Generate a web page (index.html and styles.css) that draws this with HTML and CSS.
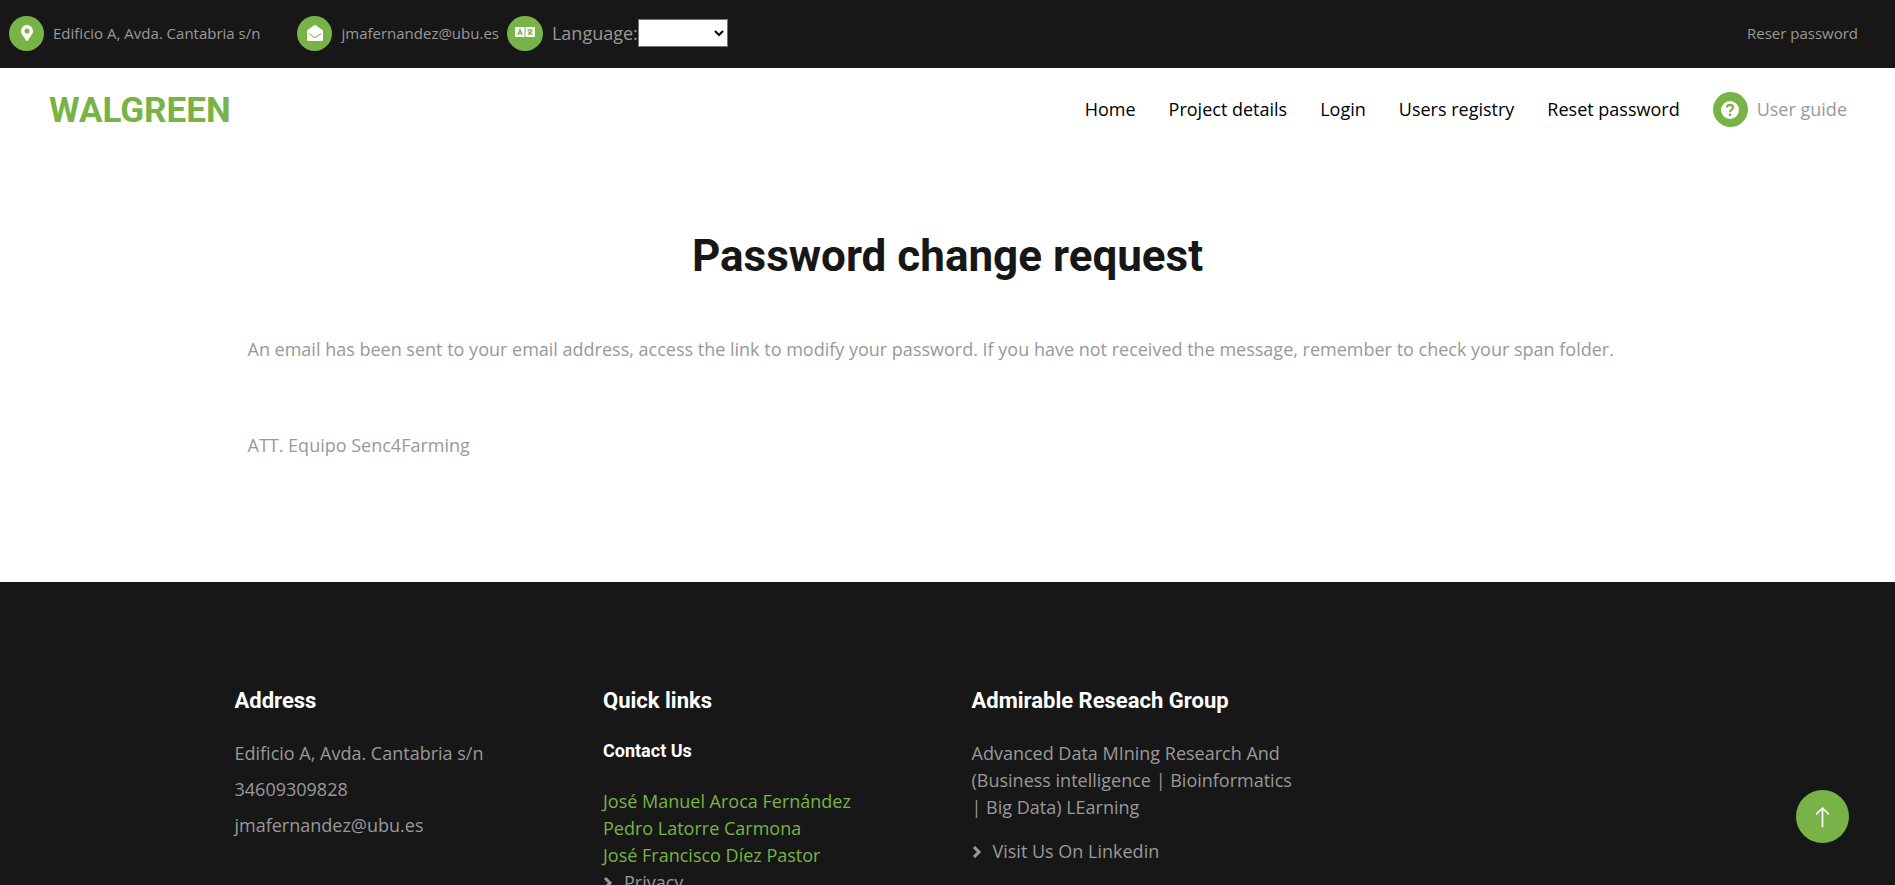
FILE: index.html
```html
<!DOCTYPE html>
<html lang="en">
<head>
<meta charset="utf-8">
<title>Walgreen - Password change request</title>
<link rel="stylesheet" href="styles.css">
</head>
<body>
<div class="topbar">
  <div class="topbar-info">
    <span class="badge"><svg viewBox="0 0 384 512" width="12" height="16"><path fill="currentColor" d="M172 502C27 291 0 270 0 192a192 192 0 0 1 384 0c0 78-27 99-172 310a24 24 0 0 1-40 0zM192 272a80 80 0 1 0 0-160 80 80 0 0 0 0 160z"/></svg></span>
    <span class="topbar-text topbar-address">Edificio A, Avda. Cantabria s/n</span>
    <span class="badge"><svg viewBox="0 0 512 512" width="16" height="16"><path fill="currentColor" d="M512 464a48 48 0 0 1-48 48H48a48 48 0 0 1-48-48V200.700a48 48 0 0 1 18.400-37.800C42.900 143.800 64 127.600 186 39.400 202.700 27.200 235.900-.3 256 0c20.100-.3 53.300 27.200 70 39.400 122 88.200 143.100 104.400 167.600 123.500A48 48 0 0 1 512 200.700V464zm-65.700-196.600a12 12 0 0 0-16.900-2.500c-19.400 14.200-50.400 36.600-103.500 75.200C309.200 353.300 276.100 384.200 256 384c-20.100.2-53.200-30.700-69.900-43.900-53.100-38.600-84.100-61-103.500-75.200a12 12 0 0 0-16.900 2.500l-4.600 6.600a12 12 0 0 0 2.700 16.700c19.500 14.200 50.400 36.600 103.300 75.100 20.400 14.900 54.900 46.500 88.900 46.200 34 .3 68.500-31.300 88.900-46.200 52.900-38.500 83.800-60.900 103.300-75.100a12 12 0 0 0 2.700-16.700z"/></svg></span>
    <span class="topbar-text topbar-mail">jmafernandez@ubu.es</span>
    <span class="badge badge-language"><svg viewBox="0 0 20 16" width="20" height="16"><path fill="currentColor" d="M1 2h8.500v10H1a1 1 0 0 1-1-1V3a1 1 0 0 1 1-1zm9.500 0H19a1 1 0 0 1 1 1v8a1 1 0 0 1-1 1h-8.500z"/><path fill="none" stroke="#78b347" stroke-width="1.300" d="M2.800 10 5 4.500 7.200 10M3.600 8.300h2.800M12.500 5.200h5M15 4v1.200M16.800 5.500c-.5 2-2 3.500-4 4.200M13.400 6.500c.8 1.500 2 2.600 4 3.200"/></svg></span>
    <label class="language-label" for="language">Language:</label><select class="language-select" id="language"><option></option><option>English</option><option>Español</option></select>
  </div>
  <a class="topbar-text" href="#">Reser password</a>
</div>
<header class="header">
  <a class="brand" href="#">WALGREEN</a>
  <nav class="nav">
    <a href="#">Home</a>
    <a href="#">Project details</a>
    <a href="#">Login</a>
    <a href="#">Users registry</a>
    <a href="#">Reset password</a>
    <a class="guide" href="#"><span class="badge"><svg viewBox="0 0 18 18" width="18" height="18"><circle cx="9" cy="9" r="9" fill="currentColor"/><path fill="none" stroke="#78b347" stroke-width="2.200" d="M5.800 6.500C6 4.700 7.300 3.900 9 3.900c1.800 0 3.100 1 3.100 2.600C12.100 8.600 9 8.600 9 11.200"/><circle cx="9" cy="13.800" r="1.400" fill="#78b347"/></svg></span>User guide</a>
  </nav>
</header>
<main class="main">
  <h1>Password change request</h1>
  <p>An email has been sent to your email address, access the link to modify your password. If you have not received the message, remember to check your span folder.</p>
  <p>ATT. Equipo Senc4Farming</p>
</main>
<footer class="footer">
  <div class="footer-grid">
    <section>
      <h2>Address</h2>
      <p class="contact-line">Edificio A, Avda. Cantabria s/n</p>
      <p class="contact-line">34609309828</p>
      <p class="contact-line">jmafernandez@ubu.es</p>
    </section>
    <section>
      <h2>Quick links</h2>
      <h3>Contact Us</h3>
      <a class="person" href="#">José Manuel Aroca Fernández</a>
      <a class="person" href="#">Pedro Latorre Carmona</a>
      <a class="person" href="#">José Francisco Díez Pastor</a>
      <a class="arrow-link" href="#"><svg viewBox="0 0 10 14" width="10" height="14"><path fill="none" stroke="currentColor" stroke-width="3" d="m2 2 5 5-5 5"/></svg>Privacy</a>
    </section>
    <section>
      <h2>Admirable Reseach Group</h2>
      <p class="about">Advanced Data MIning Research And (Business intelligence | Bioinformatics | Big Data) LEarning</p>
      <a class="arrow-link" href="#"><svg viewBox="0 0 10 14" width="10" height="14"><path fill="none" stroke="currentColor" stroke-width="3" d="m2 2 5 5-5 5"/></svg>Visit Us On Linkedin</a>
    </section>
  </div>
</footer>
<a class="back-to-top" href="#" aria-label="Back to top"><svg viewBox="0 0 24 24" width="24" height="24"><path fill="none" stroke="currentColor" stroke-width="1.700" stroke-linecap="round" stroke-linejoin="round" d="M11.500 21.500V3M5.500 9l6-6 6 6"/></svg></a>
</body>
</html>
```
FILE: styles.css
```css
* { box-sizing: border-box; }

html { scrollbar-width: none; }

body {
  margin: 0;
  background: #fff;
  color: #999;
  font-family: "Open Sans", sans-serif;
  font-size: 18px;
  line-height: 27px;
}

a { color: inherit; text-decoration: none; }
h1, h2, h3, p { margin: 0; }
svg { display: block; }

h1, h2, h3, .brand {
  font-family: Roboto, sans-serif;
  font-weight: 700;
}

.topbar {
  display: flex;
  align-items: center;
  justify-content: space-between;
  height: 68px;
  padding: 0 37px 2px 9px;
  background: #171717;
}

.topbar-info { display: flex; align-items: center; }
.topbar-text { font-size: 15px; }
.topbar-address { margin: 0 37px 0 9px; }
.topbar-mail { margin: 0 8px 0 9px; }

.badge {
  display: flex;
  align-items: center;
  justify-content: center;
  width: 35px;
  height: 35px;
  border-radius: 50%;
  background: #78b347;
  color: #fff;
}

.badge-language { width: 36px; }
.language-label { margin-left: 9px; }

.language-select {
  width: 90px;
  height: 28px;
  border: 1px solid #767676;
  background: #fff;
  font-size: 18px;
}

.header {
  display: flex;
  align-items: center;
  justify-content: space-between;
  height: 83px;
  padding: 0 48px 0 49px;
}

.brand {
  padding-top: 2px;
  color: #78b347;
  font-size: 35px;
  line-height: 42px;
}

.nav { display: flex; align-items: center; gap: 33px; color: #000; }
.guide { display: flex; align-items: center; gap: 9px; color: #999; }

.main {
  max-width: 1400px;
  margin: 0 auto;
  padding: 78px 0 96px;
}

.main h1 {
  margin-bottom: 53px;
  color: #171717;
  font-size: 44px;
  line-height: 54px;
  text-align: center;
}

.main p { padding-bottom: 27px; }
.main p + p { padding-top: 42px; }

.footer {
  padding: 105px 24px 48px;
  background: #171717;
}

.footer-grid {
  display: grid;
  grid-template-columns: repeat(4, minmax(0, 321px));
  gap: 48px;
  max-width: 1426px;
  margin: 0 auto;
}

.footer h2, .footer h3 { color: #fff; }
.footer h2 { margin-bottom: 25px; font-size: 22px; line-height: 28px; }
.footer h3 { margin-bottom: 26px; font-size: 18px; line-height: 22px; }

.contact-line { margin-bottom: 9px; }
.person { display: block; color: #78b347; }
.about { margin-bottom: 17px; }
.arrow-link { display: flex; align-items: center; gap: 11px; }

.back-to-top {
  position: fixed;
  right: 46px;
  bottom: 42px;
  display: flex;
  align-items: center;
  justify-content: center;
  width: 53px;
  height: 53px;
  border-radius: 50%;
  background: #78b347;
  color: #fff;
}
```
